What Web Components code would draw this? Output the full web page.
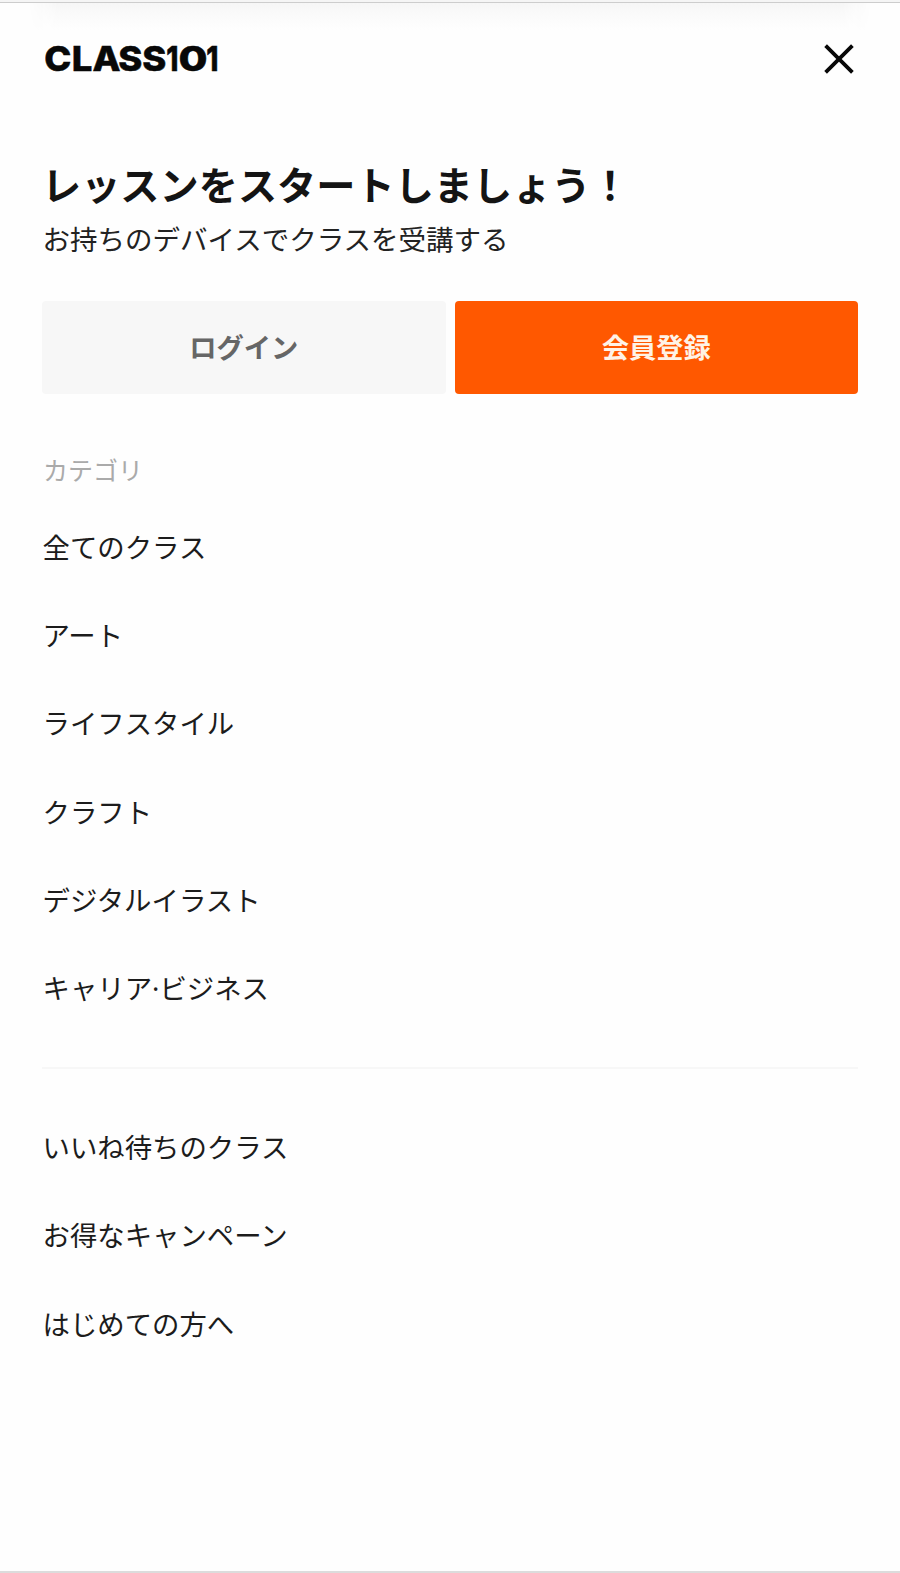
<!DOCTYPE html>
<html lang="ja">
<head>
<meta charset="utf-8">
<title>CLASS101</title>
<style>
body{margin:0;background:#fefefe;color:#1a1a1a;font-family:"Noto Sans CJK JP",sans-serif}
</style>
</head>
<body>
<side-menu>
  <menu-header slot="header"></menu-header>
  <welcome-text><span slot="title">レッスンをスタートしましょう！</span><span>お持ちのデバイスでクラスを受講する</span></welcome-text>
  <button-row><action-button>ログイン</action-button><action-button primary>会員登録</action-button></button-row>
  <menu-group>
    <span slot="label">カテゴリ</span>
    <menu-item>全てのクラス</menu-item><menu-item>アート</menu-item><menu-item>ライフスタイル</menu-item><menu-item>クラフト</menu-item><menu-item>デジタルイラスト</menu-item><menu-item>キャリア<middle-dot>·</middle-dot>ビジネス</menu-item>
  </menu-group>
  <menu-group divided>
    <menu-item>いいね待ちのクラス</menu-item><menu-item>お得なキャンペーン</menu-item><menu-item>はじめての方へ</menu-item>
  </menu-group>
</side-menu>
<script>
const define = (name, html) => customElements.define(name, class extends HTMLElement {
  constructor() {
    super();
    const t = document.createElement('template');
    t.innerHTML = html;
    this.attachShadow({mode: 'open'}).append(t.content.cloneNode(true));
  }
});
define('side-menu', `<style>
:host{display:flex;flex-direction:column;box-sizing:border-box;height:1573px;overflow:hidden;border-bottom:2px solid #dcdcdc}
.edge{flex:none;height:2px;background:#f5f5f5;border-bottom:1px solid #cdcdcd}
.shade{flex:none;height:27px;margin:0 28px;background:linear-gradient(#f6f6f6,#fafafa 40%,#fefefe);-webkit-mask-image:linear-gradient(90deg,transparent,#000 30px,#000 calc(100% - 30px),transparent)}
main{padding:0 42px}
</style><div class="edge"></div><div class="shade"></div><main><slot name="header"></slot><slot></slot></main>`);
define('menu-header', `<style>
:host{display:flex;justify-content:space-between;align-items:center;height:58px;padding:0 1px 0 3px}
svg{display:block}
text{font:800 34.4px Inter,sans-serif;fill:#080808;stroke:#080808;stroke-width:.5}
</style><svg width="178" height="40" viewBox="0 0 178 40" role="img"><text transform="scale(1.06 1)" y="32.4" x="-.8 25.3 44.8 69.2 91.8">CLASS</text><text transform="translate(121.2 32.4) scale(.8 1)">1</text><text transform="translate(133.4 32.4) scale(1.22 1)">0</text><text transform="translate(161.2 32.4) scale(.8 1)">1</text></svg>
<svg width="36" height="36" viewBox="0 0 36 36"><path d="M4.6 4.6 31.4 31.4M31.4 4.6 4.6 31.4" fill="none" stroke="#080808" stroke-width="3.8"/></svg>`);
define('welcome-text', `<style>
:host{display:block;padding-top:68px}
h1{margin:0;font-size:39.2px;line-height:54px;font-weight:700;color:#141414;white-space:nowrap}
p{margin:9px 0 0 .5px;font-size:27.5px;line-height:38px;white-space:nowrap;color:#222;font-weight:400}
</style><h1><slot name="title"></slot></h1><p><slot></slot></p>`);
define('button-row', `<style>:host{display:grid;grid-template-columns:1fr 1fr;gap:9px;margin-top:44px}</style><slot></slot>`);
define('action-button', `<style>
:host{display:block}
button{display:block;width:100%;height:92.5px;border:0;border-radius:4px;padding:0 0 1.5px;background:#f7f7f7;color:#666;font:700 27.3px/91px "Noto Sans CJK JP",sans-serif}
:host([primary]) button{background:#ff5800;color:#fff3e6}
</style><button><slot></slot></button>`);
define('menu-group', `<style>
:host{display:block;padding-top:57px}
:host([divided]){margin-top:35px;border-top:2px solid #f7f7f7;padding-top:33px}
.label{font-size:25px;line-height:36px;color:#aaa;padding:0 0 15px 1px}
:host([divided]) .label{display:none}
</style><div class="label"><slot name="label"></slot></div><nav><slot></slot></nav>`);
define('menu-item', `<style>:host{display:block;height:88.4px;line-height:88.4px;padding-left:.5px;font-size:27.4px;white-space:nowrap;color:#1c1c1c}</style><slot></slot>`);
define('middle-dot', `<style>:host{font-family:"Noto Sans",sans-serif;line-height:1}</style><slot></slot>`);
</script>
</body>
</html>
